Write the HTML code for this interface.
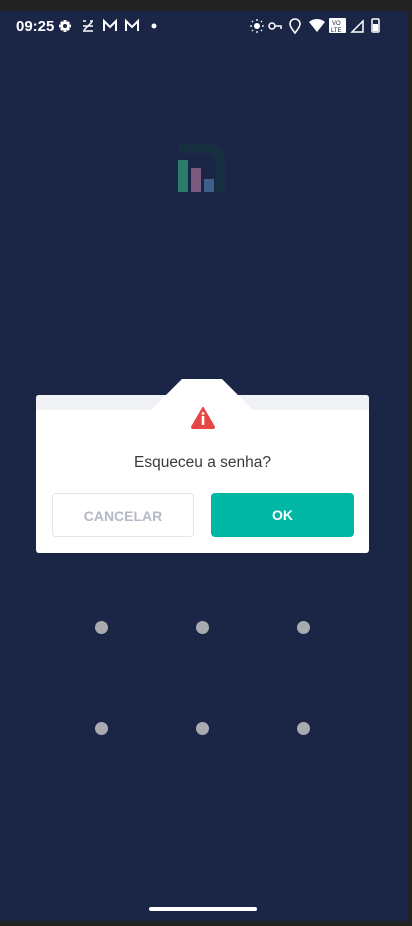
<!DOCTYPE html>
<html><head><meta charset="utf-8"><style>
*{margin:0;padding:0;box-sizing:border-box}
body{width:412px;height:926px;background:#222;position:relative;overflow:hidden;font-family:"Liberation Sans",Roboto,sans-serif}
#scr{position:absolute;left:0;top:11px;width:408px;height:910px;background:#1b2647}
.sb{position:absolute;top:11px;color:#fff;font-size:15px;font-weight:bold}
.dot{position:absolute;width:13px;height:13px;border-radius:50%;background:#a9abb0}
#dlg{position:absolute;left:36px;top:395px;width:333px;height:158px;background:#fff;border-radius:3px}
.btn{position:absolute;top:98px;height:44px;width:142px;border-radius:4px;font-weight:bold;font-size:14px;text-align:center;line-height:44px}
</style></head><body>
<div id="scr"></div>
<div class="sb" style="left:16px;top:18px">09:25</div>
<svg style="position:absolute;left:0;top:11px" width="408" height="30">
<g fill="#fff">
<path d="M65 9v12M59 15h12M61 11l8 8M61 19l8-8" stroke="#fff" stroke-width="3"/>
<circle cx="65" cy="15" r="4.5"/><circle cx="65" cy="15" r="2" fill="#1b2647"/>
<path d="M83 10h3M83 20h10M90 10h3M83 15h10M84 19l8-8" stroke="#fff" stroke-width="1.5"/>
<path d="M104 20V10l6 6 6-6v10" stroke="#fff" stroke-width="2" fill="none"/>
<path d="M126 20V10l6 6 6-6v10" stroke="#fff" stroke-width="2" fill="none"/>
<circle cx="154" cy="15" r="2.5"/>
<circle cx="257" cy="15" r="3"/>
<path d="M257 8v2M257 20v2M250 15h2M262 15h2M252 10l1 1M261 19l1 1M252 20l1-1M261 10l1 1" stroke="#fff" stroke-width="1.3"/>
<circle cx="272" cy="15" r="3" fill="none" stroke="#fff" stroke-width="1.5"/><path d="M275 15h6v3" stroke="#fff" stroke-width="1.5" fill="none"/>
<path d="M295 22c-4-5-5-7-5-9a5 5 0 0110 0c0 2-1 4-5 9z" fill="none" stroke="#fff" stroke-width="1.6"/>
<path d="M309 11a12 12 0 0116 0l-8 10z"/>
<rect x="329" y="7" width="17" height="15" rx="1"/>
<text x="332" y="14" font-size="6" fill="#1b2647" font-family="Liberation Sans">VO</text>
<text x="331" y="21" font-size="6" fill="#1b2647" font-family="Liberation Sans">LTE</text>
<path d="M352 21l11-11v11z" fill="none" stroke="#fff" stroke-width="1.5"/>
<rect x="372" y="8" width="7" height="13" rx="1" fill="none" stroke="#fff" stroke-width="1.5"/><rect x="373" y="13" width="5" height="7"/>
</g></svg>
<svg style="position:absolute;left:175px;top:142px" width="55" height="52">
<path d="M4 2h30a16 16 0 0116 16v32h-9V18a7 7 0 00-7-7H4z" fill="#17303f"/>
<rect x="3" y="18" width="10" height="32" fill="#2c7c6a"/>
<rect x="16" y="26" width="10" height="24" fill="#7a5a7f"/>
<rect x="29" y="37" width="10" height="13" fill="#3f5f8a"/>
</svg>
<div id="dlg">
<div style="position:absolute;left:0;top:0;width:333px;height:15px;background:#f1f2f5;border-radius:3px 3px 0 0"></div>
</div>
<svg style="position:absolute;left:150px;top:378px" width="104" height="33"><path d="M0 33L32 1h40l32 32z" fill="#fff"/></svg>
<svg style="position:absolute;left:191px;top:407px" width="24" height="22"><path d="M12 1L23 20a1 1 0 01-1 1H2a1 1 0 01-1-1z" fill="#e84545" stroke="#e84545" stroke-linejoin="round" stroke-width="2"/><rect x="10.7" y="9" width="2.6" height="9" fill="#fff"/><circle cx="12" cy="6.5" r="1.4" fill="#fff"/></svg>
<div style="position:absolute;left:36px;top:454px;width:333px;text-align:center;font-size:15.5px;color:#3a3a3a">Esqueceu a senha?</div>
<div class="btn" style="left:52px;top:493px;border:1px solid #e3e5ea;color:#b4b9c6;background:#fff">CANCELAR</div>
<div class="btn" style="left:211px;top:493px;width:143px;background:#00b6a4;color:#fff">OK</div>
<div class="dot" style="left:95px;top:621px"></div><div class="dot" style="left:196px;top:621px"></div><div class="dot" style="left:297px;top:621px"></div>
<div class="dot" style="left:95px;top:722px"></div><div class="dot" style="left:196px;top:722px"></div><div class="dot" style="left:297px;top:722px"></div>
<div style="position:absolute;left:149px;top:907px;width:108px;height:4px;border-radius:2px;background:#fff"></div>
</body></html>
